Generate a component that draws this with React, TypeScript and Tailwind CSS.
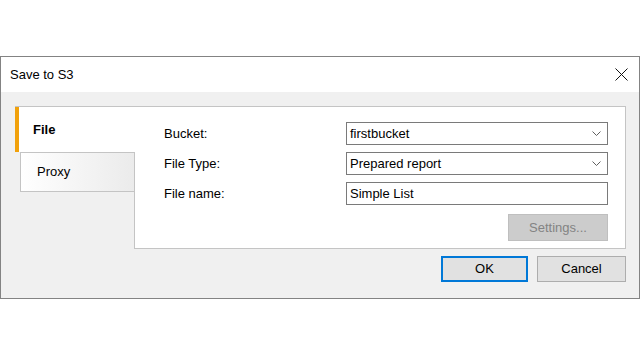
const font = { fontFamily: '"Segoe UI", "Liberation Sans", Arial, sans-serif' };

function Chevron() {
  return (
    <svg width="9" height="5" viewBox="0 0 9 5" fill="none" className="text-[#606060]">
      <path d="M0.5 0.5L4.5 4.5L8.5 0.5" stroke="currentColor" strokeWidth="1" />
    </svg>
  );
}

function Combo({ value }: { value: string }) {
  return (
    <div className="flex h-[23px] w-[262px] items-center justify-between border border-[#7a7a7a] bg-white pl-[3px] pr-[6px]">
      <span>{value}</span>
      <Chevron />
    </div>
  );
}

export default function App() {
  return (
    <div className="h-[355px] w-[640px] bg-white pt-[56px] text-[13px] text-black" style={font}>
      <div className="flex h-[243px] w-[640px] flex-col border border-[#838383] bg-[#f0f0f0]">
        {/* title bar */}
        <div className="flex h-[35px] items-center justify-between bg-white pl-[9px] pr-[11px]">
          <span className="text-[13px]">Save to S3</span>
          <svg width="13" height="13" viewBox="0 0 13 13" fill="none">
            <path d="M0.5 0.5L12.5 12.5M12.5 0.5L0.5 12.5" stroke="#111" strokeWidth="1" />
          </svg>
        </div>

        {/* body */}
        <div className="flex flex-1 flex-col pl-[14px] pr-[13px] pt-[14px]">
          <div className="flex h-[143px] border-t border-[#c4c4c4]">
            {/* tabs */}
            <div className="flex w-[120px] flex-col">
              <div className="flex h-[45px] items-center border-l-[4px] border-[#f1a10b] bg-white pl-[14px] font-bold">
                File
              </div>
              <div className="flex flex-1 flex-col border-r border-[#c4c4c4]">
                <div className="ml-[5px] flex h-[40px] items-center border-y border-l border-[#c4c4c4] bg-gradient-to-r from-white to-[#ebebeb] pl-[16px]">
                  Proxy
                </div>
              </div>
            </div>

            {/* page */}
            <div className="flex flex-1 flex-col border-b border-r border-[#c4c4c4] bg-white pl-[29px] pr-[17px] pt-[15px]">
              <div className="flex flex-col gap-[7px]">
                <div className="flex items-center justify-between">
                  <span>Bucket:</span>
                  <Combo value="firstbucket" />
                </div>
                <div className="flex items-center justify-between">
                  <span>File Type:</span>
                  <Combo value="Prepared report" />
                </div>
                <div className="flex items-center justify-between">
                  <span>File name:</span>
                  <div className="flex h-[23px] w-[262px] items-center border border-[#7a7a7a] bg-white pl-[3px]">
                    Simple List
                  </div>
                </div>
              </div>
              <div className="mt-[9px] flex justify-end">
                <div className="flex h-[27px] w-[100px] items-center justify-center border border-[#bfbfbf] bg-[#cccccc] text-[#838383]">
                  Settings...
                </div>
              </div>
            </div>
          </div>

          {/* buttons */}
          <div className="mt-[7px] flex justify-end gap-[9px]">
            <div className="flex h-[26px] w-[87px] items-center justify-center border-2 border-[#0078d7] bg-[#e1e1e1]">
              OK
            </div>
            <div className="flex h-[26px] w-[89px] items-center justify-center border border-[#adadad] bg-[#e1e1e1]">
              Cancel
            </div>
          </div>
        </div>
      </div>
    </div>
  );
}
